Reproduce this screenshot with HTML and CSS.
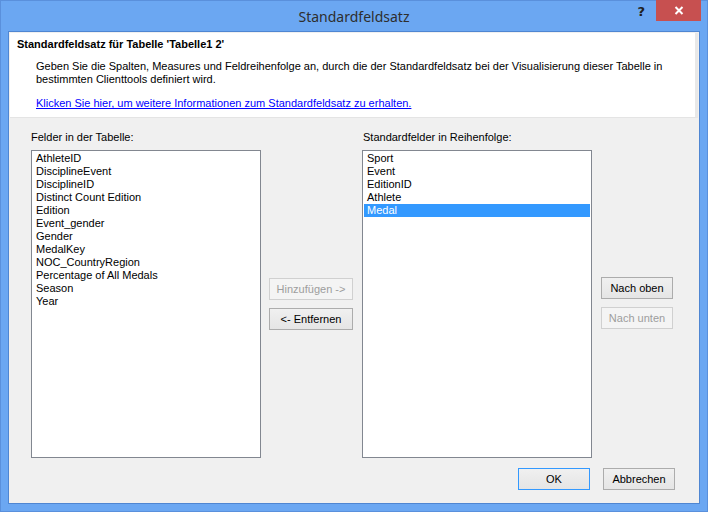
FILE: index.html
```html
<!DOCTYPE html>
<html lang="de">
<head>
<meta charset="utf-8">
<title>Standardfeldsatz</title>
<link rel="stylesheet" href="styles.css">
</head>
<body>
<div class="window">
  <div class="titlebar">
    <div class="title">Standardfeldsatz</div>
    <div class="help">?</div>
    <div class="close">
      <svg width="10" height="9" viewBox="0 0 10 9"><path d="M1.5 1 L8.5 8 M8.5 1 L1.5 8" stroke="#fff" stroke-width="2" fill="none"/></svg>
    </div>
  </div>
  <div class="client">
    <div class="header">
      <div class="header-title">Standardfeldsatz für Tabelle 'Tabelle1 2'</div>
      <div class="header-desc">Geben Sie die Spalten, Measures und Feldreihenfolge an, durch die der Standardfeldsatz bei der Visualisierung dieser Tabelle in bestimmten Clienttools definiert wird.</div>
      <a class="header-link" href="#">Klicken Sie hier, um weitere Informationen zum Standardfeldsatz zu erhalten.</a>
    </div>
    <div class="main">
      <div class="label">Felder in der Tabelle:</div>
      <div class="spacer"></div>
      <div class="label">Standardfelder in Reihenfolge:</div>
      <div class="spacer"></div>
      <div class="listbox">
        <div class="item">AthleteID</div>
        <div class="item">DisciplineEvent</div>
        <div class="item">DisciplineID</div>
        <div class="item">Distinct Count Edition</div>
        <div class="item">Edition</div>
        <div class="item">Event_gender</div>
        <div class="item">Gender</div>
        <div class="item">MedalKey</div>
        <div class="item">NOC_CountryRegion</div>
        <div class="item">Percentage of All Medals</div>
        <div class="item">Season</div>
        <div class="item">Year</div>
      </div>
      <div class="btncol mid">
        <button class="btn wide" disabled>Hinzufügen -&gt;</button>
        <button class="btn wide">&lt;- Entfernen</button>
      </div>
      <div class="listbox">
        <div class="item">Sport</div>
        <div class="item">Event</div>
        <div class="item">EditionID</div>
        <div class="item">Athlete</div>
        <div class="item selected">Medal</div>
      </div>
      <div class="btncol side">
        <button class="btn">Nach oben</button>
        <button class="btn" disabled>Nach unten</button>
      </div>
    </div>
    <div class="footer">
      <button class="btn default">OK</button>
      <button class="btn">Abbrechen</button>
    </div>
  </div>
</div>
</body>
</html>
```

FILE: styles.css
```css
* { box-sizing: border-box; }
html, body { margin: 0; padding: 0; }
body {
  width: 708px;
  height: 512px;
  overflow: hidden;
  font-family: "Liberation Sans", Arial, sans-serif;
  font-size: 11px;
  color: #000;
}
.window {
  width: 708px;
  height: 512px;
  background: #6ba7f2;
  border: 1px solid #5a90dc;
  display: flex;
  flex-direction: column;
  padding: 0 7px 7px 7px;
}
.titlebar {
  height: 30px;
  position: relative;
  flex: none;
}
.title {
  text-align: center;
  font-family: "Noto Sans", "Open Sans", sans-serif;
  font-size: 14px;
  line-height: 31px;
  color: #2e2e2e;
}
.help {
  position: absolute;
  right: 55px;
  top: 3px;
  font-family: "DejaVu Sans", sans-serif;
  font-weight: bold;
  font-size: 13px;
  color: #202020;
}
.close {
  position: absolute;
  right: -1px;
  top: -1px;
  width: 45px;
  height: 21px;
  background: #c75050;
  display: flex;
  align-items: center;
  justify-content: center;
}
.client {
  flex: 1;
  background: #f0f0f0;
  border: 1px solid #4f86d2;
  display: flex;
  flex-direction: column;
}
.header {
  margin: 1px 1px 0 1px;
  height: 85px;
  background: #fff;
  border-bottom: 1px solid #e4e4e4;
  border-right: 3px solid #e8e8e8;
  padding: 5px 0 0 7px;
}
.header-title {
  font-weight: bold;
  line-height: 13px;
}
.header-desc {
  margin: 9px 0 0 19px;
  line-height: 13px;
  width: 650px;
}
.header-link {
  display: block;
  margin: 11px 0 0 19px;
  line-height: 13px;
  color: #0000ff;
  text-decoration: underline;
}
.main {
  display: grid;
  grid-template-columns: 230px 85px 230px 73px;
  column-gap: 8px;
  grid-template-rows: auto 308px;
  margin: 13px 0 0 22px;
}
.label {
  line-height: 13px;
  height: 19px;
}
.label + .spacer + .label { margin-left: 1px; }
.listbox {
  background: #fff;
  border: 1px solid #828790;
  padding: 1px;
}
.item {
  height: 13px;
  line-height: 13px;
  padding-left: 3px;
  white-space: nowrap;
}
.item.selected {
  background: #3399ff;
  color: #fff;
}
.btncol {
  display: flex;
  flex-direction: column;
  align-items: flex-start;
  gap: 8px;
  padding-top: 128px;
}
.btncol.side { padding-left: 1px; padding-top: 127px; }
.btn {
  font-family: "Liberation Sans", Arial, sans-serif;
  font-size: 11px;
  color: #000;
  width: 72px;
  height: 22px;
  padding: 0;
  border: 1px solid #acacac;
  background: linear-gradient(#f0f0f0, #e5e5e5);
  border-radius: 0;
}
.btn.wide { width: 84px; }
.btn:disabled {
  color: #9d9d9d;
  border-color: #d0d0d0;
  background: #f4f4f4;
}
.btn.default { border-color: #3399ff; }
.footer {
  display: flex;
  justify-content: flex-end;
  gap: 13px;
  margin-top: auto;
  padding: 0 24px 13px 0;
}
```
